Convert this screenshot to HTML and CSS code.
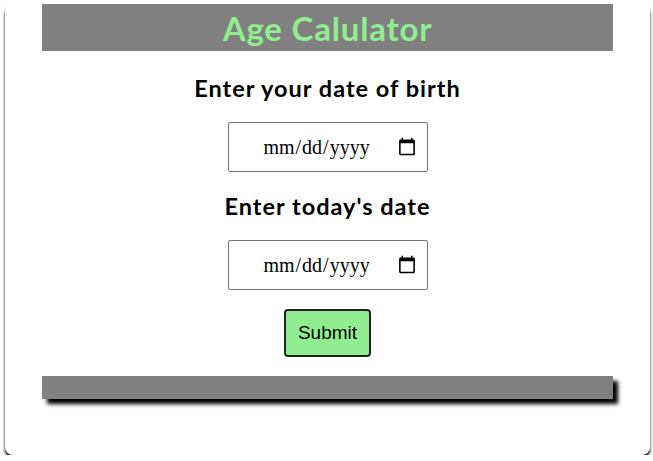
FILE: index.html
```html
<!DOCTYPE html>
<html>
<head>
<meta charset="utf-8">
<link rel="stylesheet" href="styles.css">
</head>
<body>
<div class="card">
  <div class="header"><h1 class="title">Age Calulator</h1></div>
  <div class="form">
    <h2 class="label first">Enter your date of birth</h2>
    <input class="date" type="date">
    <h2 class="label">Enter today's date</h2>
    <input class="date" type="date">
    <button class="submit" type="button">Submit</button>
    <div class="footer"></div>
  </div>
</div>
</body>
</html>
```
FILE: styles.css
```css
html, body {
  margin: 0;
  padding: 0;
  background: #ffffff;
}
body {
  padding: 4px 3px 0 5px;
}
.card {
  width: 645px;
  height: 451px;
  background: #ffffff;
  border-radius: 8px;
  box-shadow: 0 3px 3px #000000;
  display: flex;
  flex-direction: column;
  align-items: center;
}
.header {
  width: 571px;
  height: 47px;
  background: #808080;
  display: flex;
  align-items: center;
  justify-content: center;
}
.title {
  margin: 0;
  font-family: "Lato", "Open Sans", sans-serif;
  font-weight: 700;
  font-size: 33px;
  letter-spacing: 0.8px;
  line-height: 40px;
  color: #90ee90;
}
.form {
  width: 571px;
  display: flex;
  flex-direction: column;
  align-items: center;
  gap: 20px;
}
.label {
  margin: 0;
  font-family: "Lato", "Open Sans", sans-serif;
  font-weight: 700;
  font-size: 23.5px;
  letter-spacing: 1px;
  line-height: 28px;
  color: #000000;
}
.first {
  margin-top: 23px;
}
.date {
  box-sizing: border-box;
  width: 200px;
  height: 50px;
  margin: 0;
  padding: 0 8px 0 10px;
  border: 1px solid #767676;
  border-radius: 2px;
  font-family: "Liberation Serif", serif;
  font-size: 20px;
  text-align: center;
  color: #000000;
  background: #ffffff;
}
.submit {
  box-sizing: border-box;
  width: 87px;
  height: 48px;
  margin: -1px 0 0 0;
  padding: 0;
  background: #90ee90;
  border: 2px solid #222222;
  border-radius: 4px;
  font-family: "Liberation Sans", Arial, sans-serif;
  font-size: 19px;
  color: #000000;
}
.footer {
  width: 571px;
  height: 23px;
  margin-top: -1px;
  background: #808080;
  box-shadow: 5px 5px 4px #000000;
}
```
